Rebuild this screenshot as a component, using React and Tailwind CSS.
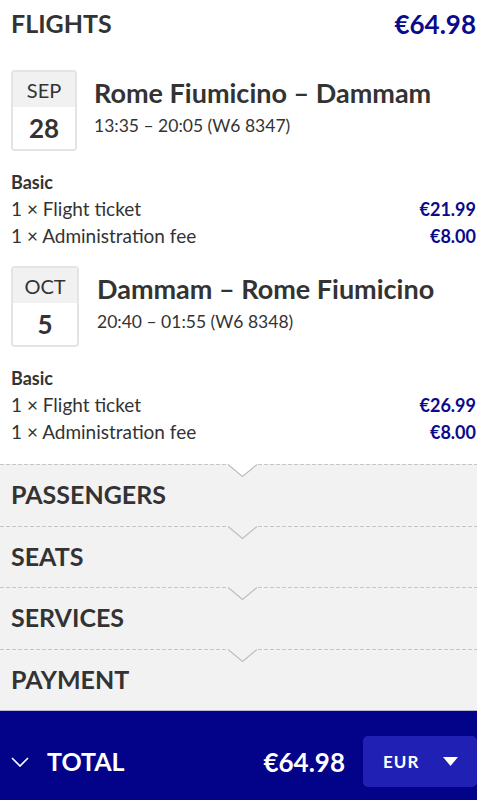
import React from "react";

const NAVY = "text-[#0a0a8c]";

function DateBox({ month, day, w }) {
  return (
    <div className={`${w} h-[81px] shrink-0 rounded-[4px] border-2 border-[#e4e4e4] overflow-hidden flex flex-col`}>
      <div className="h-[35px] bg-[#f1f1f1] flex items-center justify-center text-[20px] leading-none text-[#333]">
        {month}
      </div>
      <div className="flex-1 bg-white flex items-center justify-center text-[26px] font-bold leading-none text-[#333]">
        {day}
      </div>
    </div>
  );
}

function Row({ label, price, bold }) {
  return (
    <div className="flex justify-between items-center h-[27px] text-[19px]">
      <span className={bold ? "font-bold text-[18px]" : ""}>{label}</span>
      {price && <span className={`font-bold text-[18px] ${NAVY}`}>{price}</span>}
    </div>
  );
}

function Flight({ month, day, w, gap, route, time, ticket, fee }) {
  return (
    <div>
      <div className={`flex ${gap}`}>
        <DateBox month={month} day={day} w={w} />
        <div className="flex flex-col">
          <div className="mt-[7px] text-[27px] font-bold leading-[32px] text-[#333]">{route}</div>
          <div className="mt-[4px] text-[17.5px] leading-[26px] text-[#333]">{time}</div>
        </div>
      </div>
      <div className="mt-[18px]">
        <Row label="Basic" bold />
        <Row label="1 × Flight ticket" price={ticket} />
        <Row label="1 × Administration fee" price={fee} />
      </div>
    </div>
  );
}

function Section({ title, prevWhite }) {
  return (
    <div className="relative h-[61.5px] bg-[#f2f2f2] flex items-center px-[11px]">
      <div className="absolute left-0 right-0 top-0 h-px bg-[repeating-linear-gradient(90deg,#c6c6c6_0_4px,transparent_4px_6px)]" />
      <svg className="absolute left-[228px] top-0" width="29" height="14" viewBox="0 0 29 14">
        <polygon points="0,0 29,0 14.5,12.5" fill={prevWhite ? "#ffffff" : "#f2f2f2"} />
        <polyline points="0,0.5 14.5,12.5 29,0.5" fill="none" stroke="#bdbdbd" strokeWidth="1.2" />
      </svg>
      <span className="text-[25px] font-bold text-[#333] leading-none">{title}</span>
    </div>
  );
}

export default function App() {
  return (
    <div className="w-full min-h-[800px] bg-white text-[#333] font-['Lato',sans-serif] flex flex-col">
      <div className="pl-[11px] pr-[1px]">
        <div className="h-[48px] flex justify-between items-center">
          <span className="text-[25px] font-bold">FLIGHTS</span>
          <span className={`text-[26px] font-bold ${NAVY}`}>€64.98</span>
        </div>
        <div className="mt-[22px]">
          <Flight
            month="SEP"
            day="28"
            w="w-[66px]"
            gap="gap-[17px]"
            route="Rome Fiumicino – Dammam"
            time="13:35 – 20:05 (W6 8347)"
            ticket="€21.99"
            fee="€8.00"
          />
        </div>
        <div className="mt-[16px]">
          <Flight
            month="OCT"
            day="5"
            w="w-[68px]"
            gap="gap-[18px]"
            route="Dammam – Rome Fiumicino"
            time="20:40 – 01:55 (W6 8348)"
            ticket="€26.99"
            fee="€8.00"
          />
        </div>
      </div>
      <div className="mt-[18px]">
        <Section title="PASSENGERS" prevWhite />
        <Section title="SEATS" />
        <Section title="SERVICES" />
        <Section title="PAYMENT" />
      </div>
      <div className="h-[90px] bg-[#03038a] border-t border-[#b9b9d6] flex items-center pt-[12px] pl-[11px]">
        <svg width="18" height="10" viewBox="0 0 18 10" className="shrink-0">
          <polyline points="1,1 9,9 17,1" fill="none" stroke="#ffffff" strokeWidth="1.6" />
        </svg>
        <span className="ml-[18px] text-[25px] font-bold text-white leading-none">TOTAL</span>
        <span className="ml-auto text-[26px] font-bold text-white leading-none">€64.98</span>
        <div className="ml-[18px] w-[114px] h-[51px] rounded-[5px] bg-[#2020b4] flex items-center pl-[20px]">
          <span className="text-[17px] font-bold text-white tracking-[1px] leading-none">EUR</span>
          <svg width="15" height="9" viewBox="0 0 15 9" className="ml-auto mr-[19px]">
            <polygon points="0,0 15,0 7.5,9" fill="#ffffff" />
          </svg>
        </div>
      </div>
    </div>
  );
}
